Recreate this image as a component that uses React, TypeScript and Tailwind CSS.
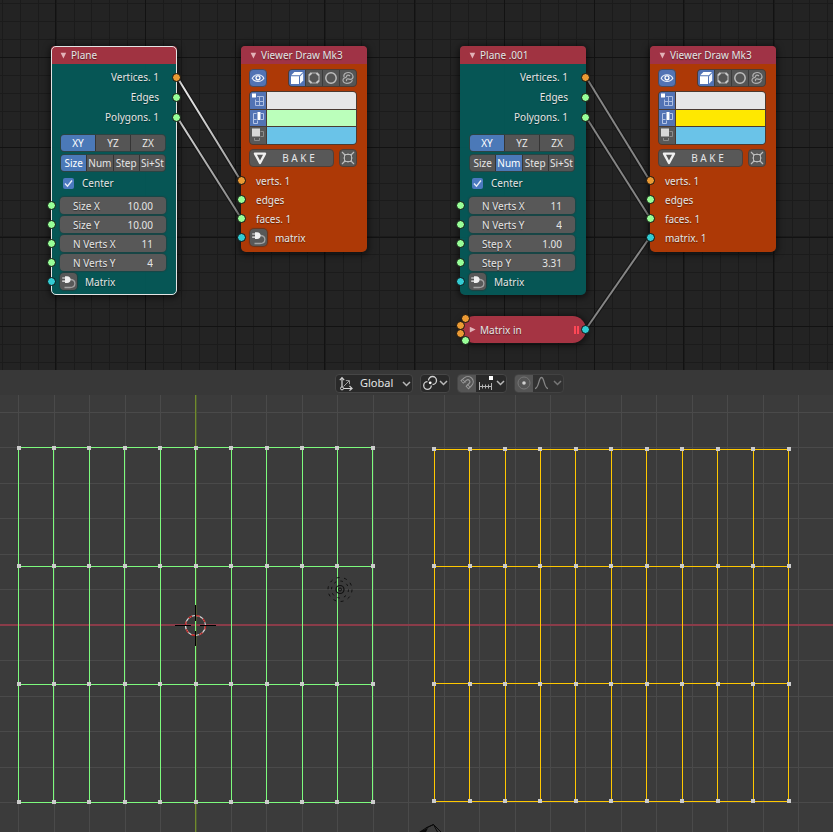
import React, { useState } from "react";

type Dot = "orange" | "green" | "cyan";

const DOT: Record<Dot, string> = {
  orange: "bg-[#eb9a34]",
  green: "bg-[#98ff98]",
  cyan: "bg-[#33ccd3]",
};

const range = (n: number) => Array.from({ length: n }, (_, i) => i);

function Socket({ color, className }: { color: Dot; className: string }) {
  return (
    <span
      className={`absolute size-[9px] rounded-full border border-[#101010] ${DOT[color]} ${className}`}
    />
  );
}

/* ---------- icons ---------- */

function Triangle() {
  return (
    <svg width="7" height="7" viewBox="0 0 7 7" aria-hidden="true">
      <path d="M0.6 0.8h5.6L3.4 6.6z" fill="#e2b3b8" />
    </svg>
  );
}

function EyeIcon() {
  return (
    <svg width="16" height="16" viewBox="0 0 16 16" fill="none" aria-hidden="true">
      <path d="M2.2 8.2C4.6 3.6 11.4 3.6 13.8 8.2 11.4 12.4 4.6 12.4 2.2 8.2z" stroke="#e8eefa" strokeWidth="1.2" />
      <circle cx="8" cy="7.8" r="2" stroke="#fff" strokeWidth="1.3" />
    </svg>
  );
}

function CubeIcon() {
  return (
    <svg width="16" height="16" viewBox="0 0 16 16" aria-hidden="true">
      <path d="M2 6.2h8V14H2z" fill="#fff" />
      <path d="M2.2 5.2 5.4 2H14l-3.2 3.2z" fill="#fff" />
      <path d="M11 6.4 14.2 3v7.4L11 13.8z" fill="#f4f7fd" />
    </svg>
  );
}

function VertRingIcon() {
  return (
    <svg width="16" height="16" viewBox="0 0 16 16" fill="none" aria-hidden="true">
      <path d="M5.6 3h4.8L13 5.6v4.8L10.4 13H5.6L3 10.4V5.6z" stroke="#b4b4b4" strokeWidth="1.2" />
      <path
        d="M3 5.4 5.4 3M10.6 3 13 5.4M13 10.6 10.6 13M5.4 13 3 10.6"
        stroke="#c8c8c8"
        strokeWidth="2"
      />
    </svg>
  );
}

function RingIcon() {
  return (
    <svg width="16" height="16" viewBox="0 0 16 16" fill="none" aria-hidden="true">
      <circle cx="8" cy="8" r="5.2" stroke="#bdbdbd" strokeWidth="1.5" />
    </svg>
  );
}

function KnotIcon() {
  return (
    <svg width="16" height="16" viewBox="0 0 16 16" fill="none" stroke="#b0b0b0" strokeWidth="1.2" aria-hidden="true">
      <path d="M4 7C3 3.600 7 1.800 10 2.800c3.400 1.200 4 5.200 1.400 6.400-1.600.7-2.400-.6-3.800-.4-1.200.2-1.600 1.400-.8 2.200" />
      <path d="M10 6C8.600 4.600 6.600 5 6.600 6.400 6.600 7.800 4 7.400 3.200 9.200c-.9 2.200 1 4.200 3.600 4.200 2.600 0 5-1 5.600-3.200" />
    </svg>
  );
}

function VertexDisplayIcon() {
  return (
    <svg width="17" height="17" viewBox="0 0 17 17" fill="none" aria-hidden="true">
      <path d="M7 4.500h6.500v9H5.500V7.500M5.500 9.500h8M9.500 4.500v9" stroke="#aebfe2" />
      <path d="M2 1.500h4v4H2z" fill="#fff" />
    </svg>
  );
}

function EdgeDisplayIcon() {
  return (
    <svg width="17" height="17" viewBox="0 0 17 17" fill="none" aria-hidden="true">
      <path d="M6.500 3.500H3.500V13.500H7.500V10.500M3.500 9.500H6.500M11 3.500H13.500V9.500H11" stroke="#b4c4e6" />
      <path d="M7.500 2h3v8h-3z" fill="#fff" />
    </svg>
  );
}

function FaceDisplayIcon() {
  return (
    <svg width="17" height="17" viewBox="0 0 17 17" fill="none" aria-hidden="true">
      <path d="M10.500 4.500h3v5h-3M4.500 11v2.500h5V11" stroke="#8c8c8c" />
      <path d="M2 1.500h8v8H2z" fill="#d8d8d8" />
    </svg>
  );
}

function BakeIcon() {
  return (
    <svg width="14" height="14" viewBox="0 0 14 14" fill="none" aria-hidden="true">
      <path d="M2 2.600h10L7 12z" stroke="#f0f0f0" strokeWidth="2.400" strokeLinejoin="round" />
    </svg>
  );
}

function ShrinkIcon() {
  return (
    <svg width="16" height="16" viewBox="0 0 16 16" fill="none" stroke="#bcbcbc" aria-hidden="true">
      <path d="M4.500 4.500h7v7h-7z" strokeWidth="1" />
      <circle cx="8" cy="8" r="4" strokeWidth="1" />
      <path d="M2 2l3 3M14 2l-3 3M2 14l3-3M14 14l-3-3" strokeWidth="1.200" />
    </svg>
  );
}

function PlugIcon() {
  return (
    <svg width="16" height="16" viewBox="0 0 16 16" fill="none" aria-hidden="true">
      <path d="M9 5.500c6.500 0 6.500 8 0 8H3.500" stroke="#a2a2a2" strokeWidth="1.300" />
      <path d="M4 2.200h2c2.400 0 3.600 1.300 3.600 3.300S8.400 9 6 9H4z" fill="#f0f0f0" />
      <path d="M1.200 4h3M1.200 7.200h3" stroke="#f0f0f0" strokeWidth="1.200" />
    </svg>
  );
}

function Chevron({ dim }: { dim?: boolean }) {
  return (
    <svg className="shrink-0" width="9" height="6" viewBox="0 0 9 6" fill="none" aria-hidden="true">
      <path d="M1 1l3.500 3.500L8 1" stroke={dim ? "#777" : "#b8b8b8"} strokeWidth="1.500" />
    </svg>
  );
}

/* ---------- node building blocks ---------- */

function NodeTitle({ title, className }: { title: string; className: string }) {
  return (
    <header className={`flex h-[18px] items-center gap-1 rounded-t-[4px] pl-[9px] ${className}`}>
      <button type="button" aria-label={`Collapse ${title}`} className="flex h-full items-center">
        <Triangle />
      </button>
      <h2 className="whitespace-nowrap">{title}</h2>
    </header>
  );
}

function Segments({ label, items, initial }: { label: string; items: string[]; initial: number }) {
  const [active, setActive] = useState(initial);
  return (
    <div
      role="group"
      aria-label={label}
      className="flex h-[18px] gap-px overflow-hidden rounded-[4px] border border-[#2b4443] bg-[#353535]"
    >
      {items.map((item, i) => (
        <button
          key={item}
          type="button"
          aria-pressed={i === active}
          onClick={() => setActive(i)}
          className={`flex flex-1 basis-0 items-center justify-center overflow-hidden whitespace-nowrap ${
            i === active ? "bg-[#4b79b8] text-white" : "bg-[#555555]"
          }`}
        >
          {item}
        </button>
      ))}
    </div>
  );
}

function NumberField({ id, label, value }: { id: string; label: string; value: string }) {
  return (
    <div className="relative">
      <Socket color="green" className="-left-[13px] top-1" />
      <div className="flex h-[17px] items-center rounded-[4px] bg-[#585858] px-[13px] shadow-[0_0_1px_1px_rgba(40,60,60,0.6)]">
        <label htmlFor={id} className="whitespace-nowrap">
          {label}
        </label>
        <input id={id} defaultValue={value} className="w-0 min-w-0 flex-1 bg-transparent text-right outline-none" />
      </div>
    </div>
  );
}

function PlugButton({ label }: { label: string }) {
  return (
    <button
      type="button"
      aria-label={label}
      className="flex size-[17px] items-center justify-center rounded-[4px] bg-[#585858] shadow-[0_0_1px_1px_rgba(50,50,50,0.6)]"
    >
      <PlugIcon />
    </button>
  );
}

type Field = { label: string; value: string };

function PlaneNode({
  id,
  title,
  mode,
  fields,
  selected,
  className,
}: {
  id: string;
  title: string;
  mode: number;
  fields: Field[];
  selected?: boolean;
  className: string;
}) {
  const outputs: [string, Dot][] = [
    ["Vertices. 1", "orange"],
    ["Edges", "green"],
    ["Polygons. 1", "green"],
  ];
  return (
    <section
      className={`absolute w-[126px] rounded-[5px] bg-[#055a58]/95 shadow-[0_1px_6px_2px_rgba(0,0,0,0.5)] ${
        selected ? "outline outline-1 -outline-offset-1 outline-[#e4e4e4]" : ""
      } ${className}`}
    >
      <NodeTitle title={title} className="bg-[#a03341]" />
      <ul className="pt-[3px]">
        {outputs.map(([name, color]) => (
          <li key={name} className="relative flex h-5 items-center justify-end pr-[18px]">
            {name}
            <Socket color={color} className="-right-1 top-[6px]" />
          </li>
        ))}
      </ul>
      <div className="flex flex-col gap-[2px] pt-[7px] pb-[5px] pl-[9px] pr-[11px]">
        <Segments label="Plane direction" items={["XY", "YZ", "ZX"]} initial={0} />
        <Segments label="Dimensions mode" items={["Size", "Num", "Step", "Si+St"]} initial={mode} />
        <label className="mb-[3px] flex h-[18px] items-center gap-2 pl-[3px]">
          <span className="relative flex size-[11px]">
            <input
              type="checkbox"
              defaultChecked
              className="peer size-[11px] appearance-none rounded-[2px] bg-[#555555] checked:bg-[#4b79c0]"
            />
            <svg
              className="pointer-events-none absolute inset-0 hidden peer-checked:block"
              width="11"
              height="11"
              viewBox="0 0 11 11"
              fill="none"
              aria-hidden="true"
            >
              <path d="M2 5.500l2.500 2.700L9 2.500" stroke="#e6edf8" strokeWidth="1.400" />
            </svg>
          </span>
          Center
        </label>
        {fields.map((f) => (
          <NumberField key={f.label} id={`${id}-${f.label}`} label={f.label} value={f.value} />
        ))}
        <div className="relative flex items-center gap-2">
          <Socket color="cyan" className="-left-[13px] top-1" />
          <PlugButton label="Matrix source" />
          <span>Matrix</span>
        </div>
      </div>
    </section>
  );
}

function ColorRow({ label, color, on, children }: { label: string; color: string; on: boolean; children: React.ReactNode }) {
  return (
    <div className="flex min-h-0 flex-1 gap-px">
      <button
        type="button"
        aria-label={`Display ${label}`}
        aria-pressed={on}
        className={`flex w-[16px] items-center justify-center overflow-hidden ${on ? "bg-[#5273b4]" : "bg-[#585858]"}`}
      >
        <span className="shrink-0">{children}</span>
      </button>
      <input
        type="color"
        aria-label={`${label} color`}
        defaultValue={color}
        className="h-full min-w-0 flex-1 appearance-none border-0 p-0 [&::-webkit-color-swatch-wrapper]:p-0 [&::-webkit-color-swatch]:rounded-none [&::-webkit-color-swatch]:border-0"
      />
    </div>
  );
}

function ViewerNode({ edgeColor, matrixLinked, className }: { edgeColor: string; matrixLinked: boolean; className: string }) {
  const [shade, setShade] = useState(0);
  const shades = [
    { name: "Flat", icon: <CubeIcon /> },
    { name: "Facet", icon: <VertRingIcon /> },
    { name: "Smooth", icon: <RingIcon /> },
    { name: "Fragment", icon: <KnotIcon /> },
  ];
  const inputs: [string, Dot][] = [
    ["verts. 1", "orange"],
    ["edges", "green"],
    ["faces. 1", "green"],
  ];
  return (
    <section
      className={`absolute w-[126px] rounded-[5px] bg-[#b03a06]/98 shadow-[0_1px_6px_2px_rgba(0,0,0,0.5)] ${className}`}
    >
      <NodeTitle title="Viewer Draw Mk3" className="bg-[#a03346]" />
      <div className="pt-[5px] pb-[5px] pl-2 pr-[10px]">
        <div className="flex h-[18px] justify-between">
          <button
            type="button"
            aria-label="Show in viewport"
            className="flex w-[18px] items-center justify-center rounded-[4px] border border-[#4a4a5c] bg-[#5273b4]"
          >
            <EyeIcon />
          </button>
          <div role="group" aria-label="Shading" className="flex w-[69px] gap-px overflow-hidden rounded-[4px] border border-[#4f3b33] bg-[#3c3c3c]">
            {shades.map((s, i) => (
              <button
                key={s.name}
                type="button"
                aria-label={s.name}
                aria-pressed={i === shade}
                onClick={() => setShade(i)}
                className={`flex flex-1 items-center justify-center ${i === shade ? "bg-[#5273b4]" : "bg-[#555555]"}`}
              >
                {s.icon}
              </button>
            ))}
          </div>
        </div>
        <div className="mt-1 flex h-[54px] flex-col gap-px overflow-hidden rounded-[4px] border border-[#4d3a30] bg-[#4a3a32]">
          <ColorRow label="Vertices" color="#e7e7e7" on>
            <VertexDisplayIcon />
          </ColorRow>
          <ColorRow label="Edges" color={edgeColor} on>
            <EdgeDisplayIcon />
          </ColorRow>
          <ColorRow label="Faces" color="#6ac3e8" on={false}>
            <FaceDisplayIcon />
          </ColorRow>
        </div>
        <div className="mt-1 flex h-[18px] justify-between">
          <button
            type="button"
            className="relative flex w-[85px] items-center justify-center rounded-[4px] border border-[#4f3f38] bg-[#585858] pl-[14px]"
          >
            <span className="absolute left-[3px] top-px">
              <BakeIcon />
            </span>
            B A K E
          </button>
          <button
            type="button"
            aria-label="Fit node"
            className="flex w-[18px] items-center justify-center rounded-[4px] border border-[#4f3f38] bg-[#585858]"
          >
            <ShrinkIcon />
          </button>
        </div>
        <ul className="pt-1">
          {inputs.map(([name, color]) => (
            <li key={name} className="relative flex h-[19px] items-center pl-[7px]">
              <Socket color={color} className="-left-3 top-[5px]" />
              {name}
            </li>
          ))}
          <li className={`relative flex h-[19px] items-center gap-2 ${matrixLinked ? "pl-[7px]" : "pl-px"}`}>
            <Socket color="cyan" className="-left-3 top-[5px]" />
            {matrixLinked ? (
              "matrix. 1"
            ) : (
              <>
                <PlugButton label="Matrix source" />
                matrix
              </>
            )}
          </li>
        </ul>
      </div>
    </section>
  );
}

function MatrixInNode() {
  return (
    <section className="absolute left-[461px] top-[316px] flex h-[27px] w-[125px] items-center gap-1 rounded-full bg-[#a53443] pl-2 pr-[7px] shadow-[0_1px_6px_2px_rgba(0,0,0,0.5)]">
      <button type="button" aria-label="Expand Matrix in" className="flex -rotate-90">
        <Triangle />
      </button>
      <h2 className="flex-1">Matrix in</h2>
      <span className="h-[8px] w-[5px] border-x-2 border-[#ff4756]" />
      <Socket color="orange" className="left-0 -top-[2px]" />
      <Socket color="orange" className="-left-[5px] top-[5px]" />
      <Socket color="orange" className="-left-[5px] top-[13px]" />
      <Socket color="green" className="left-0 top-[20px]" />
      <Socket color="cyan" className="-right-1 top-[9px]" />
    </section>
  );
}

function NodeEditor() {
  const wires = [
    [586, 77, 650, 181],
    [586, 117, 650, 218],
    [586, 329, 650, 237],
  ];
  const step = 17.95;
  return (
    <main className="relative h-[370px] shrink-0 overflow-hidden bg-[#232323] [text-shadow:0_1px_1px_rgba(0,0,0,0.45)]">
      <svg className="absolute inset-0 size-full" aria-hidden="true">
        <defs>
          <linearGradient id="wire" gradientUnits="userSpaceOnUse" x1="177" y1="77" x2="241" y2="200">
            <stop offset="0" stopColor="#f4f4f4" />
            <stop offset="1" stopColor="#8a8a8a" />
          </linearGradient>
        </defs>
        <g stroke="#1b1b1b">
          {range(150).map((i) => {
            const x = Math.round(1.7 + i * step) + 0.5;
            return <line key={i} x1={x} x2={x} y1="0" y2="370" />;
          })}
          {range(21).map((i) => {
            const y = Math.round(3 + i * step) + 0.5;
            return <line key={i} x1="0" x2="2700" y1={y} y2={y} />;
          })}
        </g>
        <g stroke="#121212">
          {range(30).map((i) => {
            const x = Math.round(55 + i * step * 5) + 0.5;
            return <line key={i} x1={x} x2={x} y1="0" y2="370" />;
          })}
          {range(4).map((i) => {
            const y = Math.round(57 + i * step * 5) + 0.5;
            return <line key={i} x1="0" x2="2700" y1={y} y2={y} />;
          })}
        </g>
        <g strokeWidth="4" stroke="#161616">
          <path d="M177 77L241 181M177 117L241 218M586 77L650 181M586 117L650 218M586 329L650 237" />
        </g>
        <g strokeWidth="2">
          <path d="M177 77L241 181M177 117L241 218" stroke="url(#wire)" />
          {wires.map(([x1, y1, x2, y2]) => (
            <line key={y1} x1={x1} y1={y1} x2={x2} y2={y2} stroke="#858585" />
          ))}
        </g>
      </svg>
      <PlaneNode
        id="plane"
        title="Plane"
        mode={0}
        selected
        className="left-[51px] top-[46px]"
        fields={[
          { label: "Size X", value: "10.00" },
          { label: "Size Y", value: "10.00" },
          { label: "N Verts X", value: "11" },
          { label: "N Verts Y", value: "4" },
        ]}
      />
      <ViewerNode edgeColor="#bbffbb" matrixLinked={false} className="left-[241px] top-[46px]" />
      <PlaneNode
        id="plane001"
        title="Plane .001"
        mode={1}
        className="left-[460px] top-[46px]"
        fields={[
          { label: "N Verts X", value: "11" },
          { label: "N Verts Y", value: "4" },
          { label: "Step X", value: "1.00" },
          { label: "Step Y", value: "3.31" },
        ]}
      />
      <ViewerNode edgeColor="#ffe800" matrixLinked className="left-[650px] top-[46px]" />
      <MatrixInNode />
    </main>
  );
}

/* ---------- 3D viewport ---------- */

function ViewportHeader() {
  return (
    <nav
      aria-label="Viewport tools"
      className="flex h-[25px] shrink-0 items-center gap-[7px] bg-[#383838] pl-[335px] pt-px text-[11px]"
    >
      <label className="relative flex h-[19px] w-[78px] items-center rounded-[4px] border border-[#464646] bg-[#292929]">
        <svg className="pointer-events-none absolute left-[2px] top-px" width="16" height="16" viewBox="0 0 16 16" fill="none" stroke="#d8d8d8" aria-hidden="true">
          <path d="M4 2v9.500M4 12.500h9.500" strokeWidth="1.200" />
          <path d="M1.800 4.200 4 1.600l2.200 2.600M11.500 10l2.600 2.400-2.600 2.200" strokeWidth="1.100" />
          <path d="M5.500 10.500 11 5M7.800 4.600H11.500V8.200" stroke="#a0a0a0" />
          <circle cx="4" cy="12.400" r="1.500" fill="#292929" />
        </svg>
        <select aria-label="Transform orientation" className="size-full appearance-none bg-transparent pl-6 leading-4 outline-none">
          <option>Global</option>
          <option>Local</option>
        </select>
        <span className="pointer-events-none absolute right-px top-[6px]">
          <Chevron />
        </span>
      </label>
      <button type="button" aria-label="Pivot point" className="flex h-[19px] w-[30px] items-center justify-center gap-px rounded-[4px] border border-[#464646] bg-[#292929]">
        <svg className="shrink-0" width="16" height="16" viewBox="0 0 16 16" fill="none" stroke="#d0d0d0" strokeWidth="1.300" aria-hidden="true">
          <path d="M6.500 5.500A4 4 0 1 1 10.500 9.500" />
          <path d="M5.500 6.700A3.800 3.800 0 1 0 9.300 10.500" />
          <circle cx="8.200" cy="7.800" r="1.400" fill="#fff" stroke="none" />
        </svg>
        <Chevron />
      </button>
      <div className="flex h-[19px] w-[50px] overflow-hidden rounded-[4px] border border-[#464646] bg-[#292929]">
        <button type="button" aria-label="Snap" className="flex w-[18px] items-center justify-center bg-[#555555]">
          <svg width="16" height="16" viewBox="0 0 16 16" fill="none" aria-hidden="true">
            <path d="M2.800 7.200 6 4.300C10 .8 15 5.700 11.200 9.700L8 12.800" stroke="#999" strokeWidth="4.400" />
            <path d="M3.400 6.700 6 4.300C10 .8 15 5.700 11.200 9.700L8.600 12.200" stroke="#555" strokeWidth="2.200" />
            <path d="M3.900 4.700l2.800 2.800M8.100 9.200l2.800 2.900" stroke="#999" />
          </svg>
        </button>
        <button type="button" aria-label="Snapping options" className="flex flex-1 items-center justify-center gap-[2px] pl-px">
          <svg className="shrink-0" width="16" height="15" viewBox="0 0 16 15" fill="none" aria-hidden="true">
            <path d="M1.500 6v8M13.500 7v7M1.500 10.500h12M4.500 8.500v4M7.500 8.500v4M10.500 8.500v4" stroke="#b5b5b5" />
            <path d="M11 0h4v4h-4z" fill="#fff" />
          </svg>
          <Chevron />
        </button>
      </div>
      <div className="flex h-[19px] w-[50px] overflow-hidden rounded-[4px] border border-[#424242] bg-[#323232]">
        <button type="button" aria-label="Proportional editing" className="flex w-[18px] items-center justify-center bg-[#555555]">
          <svg width="16" height="16" viewBox="0 0 16 16" fill="none" aria-hidden="true">
            <circle cx="8" cy="8" r="6" stroke="#767676" />
            <circle cx="8" cy="8" r="1.800" fill="#d0d0d0" />
          </svg>
        </button>
        <button type="button" aria-label="Falloff" className="flex flex-1 items-center justify-center gap-1">
          <svg className="shrink-0" width="15" height="14" viewBox="0 0 15 14" fill="none" aria-hidden="true">
            <path d="M1 12.500c4 0 3.500-11 6.500-11s2.500 11 6.500 11" stroke="#858585" strokeWidth="1.300" />
          </svg>
          <Chevron dim />
        </button>
      </div>
    </nav>
  );
}

type MeshData = { xs: number[]; ys: number[]; lineXs: number[]; lineYs: number[] };

const SIZE_PLANE: MeshData = {
  xs: [19, 54, 89, 125, 160, 196, 231, 267, 302, 337, 373],
  ys: [53, 171, 289, 407],
  lineXs: [18, 53, 89, 124, 160, 195, 231, 266, 302, 337, 372],
  lineYs: [52, 171, 289, 407],
};

const NUM_PLANE: MeshData = {
  xs: [434, 470, 505, 540, 576, 611, 647, 682, 718, 753, 789],
  ys: [54, 171, 289, 406],
  lineXs: [434, 469, 505, 540, 575, 611, 646, 682, 717, 753, 788],
  lineYs: [54, 171, 288, 406],
};

function Mesh({ data, color }: { data: MeshData; color: string }) {
  const { xs, ys, lineXs, lineYs } = data;
  return (
    <g>
      <g stroke={color}>
        {lineXs.map((x) => (
          <line key={x} x1={x + 0.5} x2={x + 0.5} y1={ys[0]} y2={ys[3]} />
        ))}
        {lineYs.map((y) => (
          <line key={y} x1={xs[0]} x2={xs[10]} y1={y + 0.5} y2={y + 0.5} />
        ))}
      </g>
      {xs.flatMap((x) =>
        ys.map((y) => <rect key={`${x}-${y}`} x={x - 2} y={y - 2} width="4" height="4" fill="#cccccc" />),
      )}
    </g>
  );
}

function Viewport() {
  return (
    <section aria-label="3D viewport" className="relative min-h-[437px] flex-1 overflow-hidden bg-[#3b3b3b]">
      <svg className="absolute inset-0 size-full" role="img" aria-label="Two plane grids">
        <g stroke="#4a4a4a">
          {range(80).map((i) => {
            const x = Math.round(18.400 + i * 35.440) + 0.5;
            return <line key={i} x1={x} x2={x} y1="0" y2="2000" />;
          })}
          {range(50).map((i) => {
            const y = Math.round(17 + i * 35.450) + 0.5;
            return <line key={i} x1="0" x2="2800" y1={y} y2={y} />;
          })}
        </g>
        <line x1="195.500" x2="195.500" y1="0" y2="2000" stroke="#728a2c" />
        <line x1="196.500" x2="196.500" y1="0" y2="2000" stroke="#4a5833" />
        <line x1="0" x2="2800" y1="230" y2="230" stroke="#8a3c49" strokeWidth="2" />
        <Mesh data={SIZE_PLANE} color="#7dfb7d" />
        <Mesh data={NUM_PLANE} color="#ffc800" />
        {/* 3D cursor */}
        <g fill="none">
          <circle cx="195.500" cy="230.500" r="10" stroke="#d8d8d8" strokeWidth="1.200" />
          <circle cx="195.500" cy="230.500" r="10" stroke="#c41818" strokeWidth="1.200" strokeDasharray="4 3.850" />
          <path d="M175 230.500h16M200 230.500h16M195.500 210v16M195.500 236v15" stroke="#000" />
        </g>
        {/* point light */}
        <g fill="none" stroke="#101010">
          <circle cx="340" cy="194.500" r="1.500" />
          <circle cx="340" cy="194.500" r="4" strokeWidth="1.200" />
          <circle cx="340" cy="194.500" r="8.500" strokeDasharray="2.500 4.200" />
          <circle cx="340" cy="194.500" r="12" strokeDasharray="3 4.540" />
        </g>
        {/* camera */}
        <path d="M420 437l6-4 7.500-3.500 7.500 7.500M426 433l7.500-3.500 4 7.500" fill="none" stroke="#0a0a0a" />
        <path d="M419 437l9-4-2 4z" fill="#0a0a0a" />
      </svg>
    </section>
  );
}

export default function App() {
  return (
    <div className="flex min-h-screen flex-col bg-[#3b3b3b] font-['Noto_Sans','DejaVu_Sans',sans-serif] text-[10px] leading-4 text-[#e6e6e6]">
      <NodeEditor />
      <ViewportHeader />
      <Viewport />
    </div>
  );
}
